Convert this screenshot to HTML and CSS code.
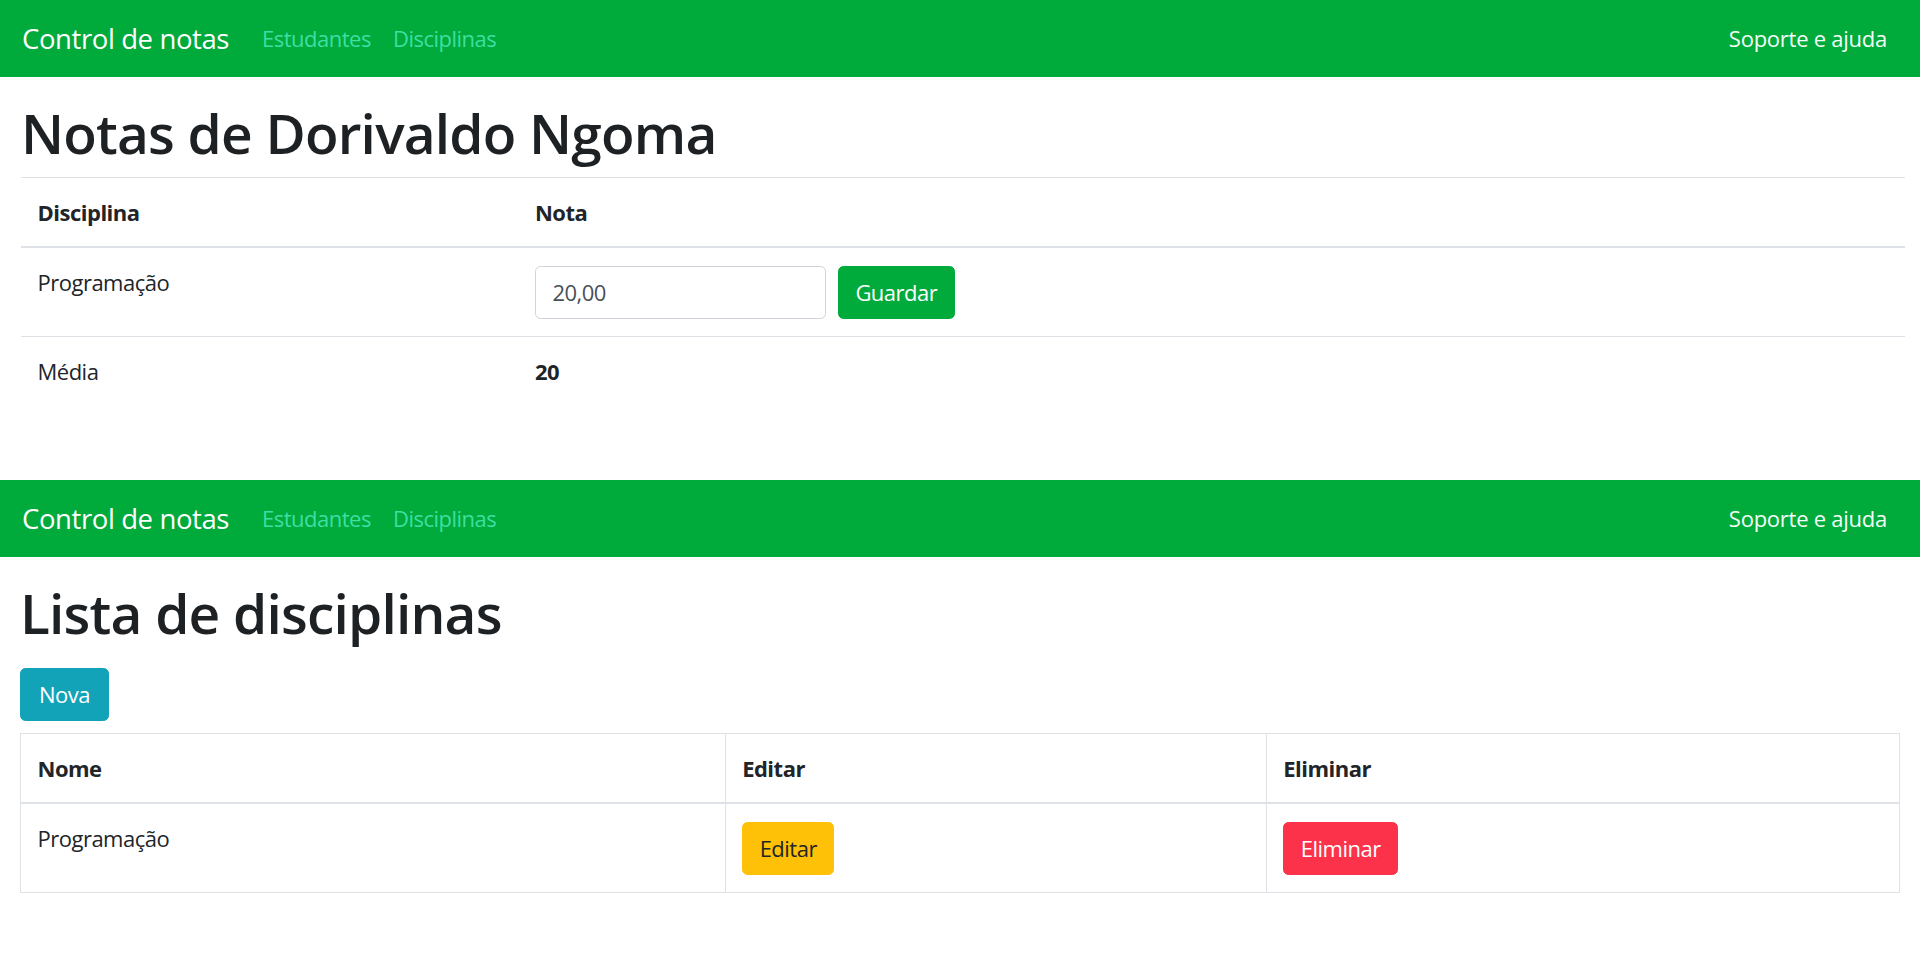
FILE: index.html
```html
<!DOCTYPE html>
<html lang="pt">
<head>
<meta charset="utf-8">
<title>Control de notas</title>
<link rel="stylesheet" href="styles.css">
</head>
<body>
<section class="screen screen-top">
  <nav class="navbar">
    <a class="brand" href="#">Control de notas</a>
    <ul class="nav-links">
      <li><a href="#">Estudantes</a></li>
      <li><a href="#">Disciplinas</a></li>
    </ul>
    <a class="nav-help" href="#">Soporte e ajuda</a>
  </nav>
  <main class="content content-top">
    <h1 class="title">Notas de Dorivaldo Ngoma</h1>
    <table class="table table-notes">
      <thead>
        <tr><th class="col-disc">Disciplina</th><th>Nota</th></tr>
      </thead>
      <tbody>
        <tr>
          <td>Programação</td>
          <td>
            <form class="grade-form">
              <input class="input" type="text" value="20,00">
              <button type="button" class="btn btn-success">Guardar</button>
            </form>
          </td>
        </tr>
        <tr>
          <td>Média</td>
          <td><strong>20</strong></td>
        </tr>
      </tbody>
    </table>
  </main>
</section>
<section class="screen screen-bottom">
  <nav class="navbar">
    <a class="brand" href="#">Control de notas</a>
    <ul class="nav-links">
      <li><a href="#">Estudantes</a></li>
      <li><a href="#">Disciplinas</a></li>
    </ul>
    <a class="nav-help" href="#">Soporte e ajuda</a>
  </nav>
  <main class="content content-bottom">
    <h1 class="title">Lista de disciplinas</h1>
    <div class="toolbar">
      <button type="button" class="btn btn-info">Nova</button>
    </div>
    <table class="table table-bordered">
      <thead>
        <tr><th class="col-name">Nome</th><th class="col-edit">Editar</th><th>Eliminar</th></tr>
      </thead>
      <tbody>
        <tr>
          <td>Programação</td>
          <td><button type="button" class="btn btn-warning">Editar</button></td>
          <td><button type="button" class="btn btn-danger">Eliminar</button></td>
        </tr>
      </tbody>
    </table>
  </main>
</section>
</body>
</html>
```
FILE: styles.css
```css
* { box-sizing: border-box; }

html, body {
  margin: 0;
  padding: 0;
  background: #ffffff;
}

body {
  font-family: "Open Sans", "Noto Sans", "Liberation Sans", sans-serif;
  font-size: 22px;
  line-height: 33px;
  letter-spacing: -0.5px;
  color: #212529;
}

.screen {
  height: 480px;
  overflow: hidden;
}

/* navbar */
.navbar {
  height: 77px;
  background: #00aa3b;
  display: flex;
  align-items: center;
  padding: 0 22px;
}

.brand {
  font-size: 27.5px;
  line-height: 41px;
  letter-spacing: -0.4px;
  color: #ffffff;
  text-decoration: none;
  margin-right: 22px;
}

.nav-links {
  display: flex;
  list-style: none;
  margin: 0;
  padding: 0;
  flex: 1;
}

.nav-links a,
.nav-help {
  display: block;
  padding: 0 11px;
  color: #3ddfa2;
  text-decoration: none;
  font-size: 22px;
}

.nav-help {
  color: #f4fff8;
  letter-spacing: -0.25px;
}

/* content */
.content {
  padding-top: 23px;
}

.content-top {
  padding-left: 21px;
  padding-right: 15px;
}

.content-bottom {
  padding-left: 20px;
  padding-right: 20px;
}

.title {
  font-size: 55px;
  line-height: 66px;
  font-weight: 600;
  letter-spacing: -0.8px;
  margin: 0 0 11px;
  color: #1d2124;
}

.toolbar {
  padding: 11px 0 12px;
}

/* tables */
.table {
  width: 100%;
  border-collapse: collapse;
}

.table th,
.table td {
  text-align: left;
  vertical-align: top;
  padding: 17.5px 16.5px;
  border-top: 1.4px solid #dee2e6;
}

.table th {
  font-weight: 700;
}

.table thead th {
  border-bottom: 2.8px solid #dee2e6;
  vertical-align: bottom;
}

.col-disc { width: 26.4%; }
.col-name { width: 37.5%; }
.col-edit { width: 28.8%; }

.table-bordered,
.table-bordered th,
.table-bordered td {
  border: 1.4px solid #dee2e6;
}

.table-bordered thead th {
  border-bottom-width: 2.8px;
}

/* form */
.grade-form {
  display: flex;
  align-items: center;
  gap: 12px;
  margin: 0;
}

.input {
  width: 291px;
  height: 53px;
  padding: 5px 16.5px;
  font: inherit;
  letter-spacing: -0.5px;
  color: #495057;
  border: 1.4px solid #ced4da;
  border-radius: 5.5px;
  background: #fff;
}

/* buttons */
.btn {
  display: inline-block;
  height: 53px;
  padding: 0 16.5px;
  font: inherit;
  letter-spacing: -0.5px;
  line-height: 51px;
  border: 1.4px solid transparent;
  border-radius: 5.5px;
  cursor: pointer;
}

.btn-info { padding: 0 18px; }

.btn-success { background: #00aa3b; border-color: #00aa3b; color: #fff; }
.btn-info    { background: #13a3b9; border-color: #13a3b9; color: #fff; }
.btn-warning { background: #ffc107; border-color: #ffc107; color: #212529; }
.btn-danger  { background: #fb3249; border-color: #fb3249; color: #fff; }
```
